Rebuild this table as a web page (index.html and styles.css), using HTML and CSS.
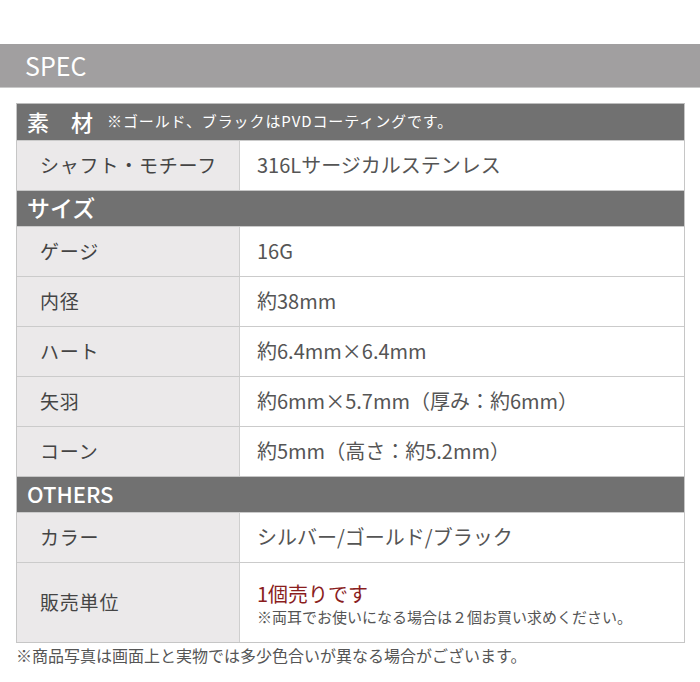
FILE: index.html
```html
<!DOCTYPE html>
<html lang="ja">
<head>
<meta charset="utf-8">
<link rel="stylesheet" href="styles.css">
</head>
<body>
<div class="page">
  <div class="spec-bar">SPEC</div>
  <div class="table">
    <div class="section"><span class="sec-title wide">素材</span><span class="sec-note">※ゴールド、ブラックはPVDコーティングです。</span></div>
    <div class="row"><div class="label">シャフト・モチーフ</div><div class="value">316Lサージカルステンレス</div></div>
    <div class="section"><span class="sec-title">サイズ</span></div>
    <div class="row"><div class="label">ゲージ</div><div class="value">16G</div></div>
    <div class="row"><div class="label">内径</div><div class="value">約38mm</div></div>
    <div class="row"><div class="label">ハート</div><div class="value">約6.4mm×6.4mm</div></div>
    <div class="row"><div class="label">矢羽</div><div class="value">約6mm×5.7mm（厚み：約6mm）</div></div>
    <div class="row"><div class="label">コーン</div><div class="value">約5mm（高さ：約5.2mm）</div></div>
    <div class="section"><span class="sec-title latin">OTHERS</span></div>
    <div class="row"><div class="label">カラー</div><div class="value">シルバー/ゴールド/ブラック</div></div>
    <div class="row tall"><div class="label">販売単位</div><div class="value stack"><span class="red">1個売りです</span><span class="small">※両耳でお使いになる場合は２個お買い求めください。</span></div></div>
  </div>
  <p class="foot">※商品写真は画面上と実物では多少色合いが異なる場合がございます。</p>
</div>
</body>
</html>
```
FILE: styles.css
```css
html, body { margin: 0; padding: 0; background: #fff; }
body { font-family: "Noto Sans CJK JP", "Noto Sans", sans-serif; color: #555; }
.page { width: 700px; height: 682px; padding-top: 44px; box-sizing: border-box; }
.spec-bar {
  height: 43px; background: #a19fa0; color: #fff;
  font-size: 25px; line-height: 43px; padding-left: 25px;
  border-bottom: 1px solid #c9c9c9;
}
.table {
  margin: 15px 15px 0 16px;
  border: 1px solid #c6c6c6; border-top-color: #bdbdbd;
}
.section {
  height: 36px; background: #717171; color: #fff;
  display: flex; align-items: center; padding-left: 10px; padding-bottom: 3px;
  box-sizing: border-box;
  border-top: 1px solid #c6c6c6;
}
.section:first-child { border-top: none; }
.sec-title { font-size: 23px; font-weight: 500; line-height: 1; }
.sec-title.wide { font-size: 22px; letter-spacing: 22px; margin-right: -8px; }
.sec-title.latin { font-size: 22px; }
.sec-note { font-size: 15px; letter-spacing: 0.9px; }
.row { display: flex; height: 49px; border-top: 1px solid #cbcbcb; }
.row.tall { height: 79px; }
.label {
  width: 223px; background: #ebe9ea; border-right: 1px solid #cfcfcf;
  display: flex; align-items: center; padding-left: 23px; padding-bottom: 3px;
  box-sizing: border-box;
  font-size: 19px; color: #444; letter-spacing: 0.8px;
}
.value {
  flex: 1; display: flex; align-items: center; padding-left: 17px; padding-bottom: 3px;
  font-size: 20px; color: #555; letter-spacing: 0;
}
.value.stack {
  flex-direction: column; align-items: flex-start; justify-content: center;
  padding-top: 4px; padding-bottom: 0;
}
.red { color: #8a1d1d; font-size: 20px; line-height: 24px; }
.small { font-size: 15px; color: #555; line-height: 22px; letter-spacing: 0; }
.foot { margin: 0 0 0 16px; font-size: 16px; color: #555; letter-spacing: 0; }
```
